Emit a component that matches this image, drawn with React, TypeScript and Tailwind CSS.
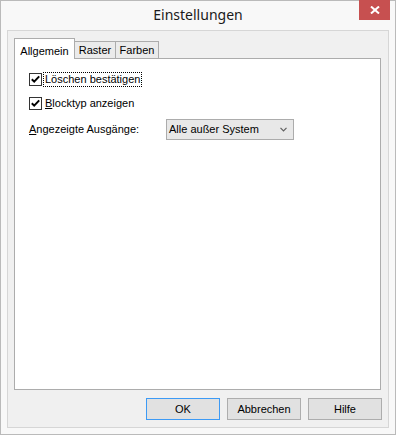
import React from 'react';

const uiFont = { fontFamily: '"Liberation Sans", Arial, sans-serif' };

function CheckBox({ checked }: { checked: boolean }) {
  return (
    <span className="flex h-[13px] w-[13px] shrink-0 items-center justify-center border border-[#333333] bg-white">
      {checked && (
        <svg width="11" height="11" viewBox="0 0 11 11">
          <polyline points="1.8,5.2 4.2,7.6 9.2,2.4" fill="none" stroke="#000" strokeWidth="2" />
        </svg>
      )}
    </span>
  );
}

function Tab({ label, active, width }: { label: string; active?: boolean; width: string }) {
  if (active) {
    return (
      <div
        className={`relative z-10 mb-[-1px] flex h-[21px] shrink-0 items-start justify-center border border-b-0 border-[#acacac] bg-white pt-[4px] ${width}`}
      >
        {label}
      </div>
    );
  }
  return (
    <div
      className={`-ml-px flex h-[17px] shrink-0 items-center justify-center border border-b-0 border-[#acacac] bg-[#ebebeb] pt-px ${width}`}
    >
      {label}
    </div>
  );
}

function DlgButton({ label, focused }: { label: string; focused?: boolean }) {
  return (
    <button
      className={`flex h-[22px] w-[74px] items-center justify-center border bg-[#e1e1e1] text-[11px] text-black ${
        focused ? 'border-[#3c9af5]' : 'border-[#adadad]'
      }`}
      style={uiFont}
    >
      {label}
    </button>
  );
}

export default function App() {
  return (
    <div className="flex h-[435px] w-[396px] flex-col border border-[#bababa] bg-[#f8f8f8]">
      {/* title bar */}
      <div className="grid h-[29px] shrink-0 grid-cols-[1fr_auto_1fr] items-start">
        <div />
        <div
          className="pt-[4px] text-[14px] leading-[20px] text-[#1a1a1a]"
          style={{ fontFamily: '"Noto Sans", "Open Sans", sans-serif' }}
        >
          Einstellungen
        </div>
        <div className="flex justify-end pr-[5px]">
          <div className="-mt-px flex h-[20px] w-[31px] items-center justify-center bg-[#c75050]">
            <svg width="10" height="8" viewBox="0 0 10 8">
              <line x1="1" y1="0.5" x2="9" y2="7.5" stroke="#fff" strokeWidth="2" />
              <line x1="9" y1="0.5" x2="1" y2="7.5" stroke="#fff" strokeWidth="2" />
            </svg>
          </div>
        </div>
      </div>

      {/* client frame */}
      <div
        className="mx-[6px] flex h-[398px] flex-col border border-[#d6d6d6] bg-[#f0f0f0] pl-[6px] pt-[7px] text-[11px] text-black"
        style={uiFont}
      >
        <div className="flex h-[20px] items-end">
          <Tab label="Allgemein" active width="w-[61px]" />
          <Tab label="Raster" width="w-[42px]" />
          <Tab label="Farben" width="w-[44px]" />
        </div>

        <div className="flex h-[332px] w-[367px] flex-col border border-[#acacac] bg-white pl-[14px] pt-[12px]">
          <div className="flex h-[16px] items-center">
            <CheckBox checked />
            <span className="ml-px border border-dotted border-black px-px leading-[13px]">Löschen bestätigen</span>
          </div>
          <div className="mt-[8px] flex h-[16px] items-center">
            <CheckBox checked />
            <span className="ml-px border border-transparent px-px leading-[13px]">
              <span className="underline">B</span>locktyp anzeigen
            </span>
          </div>
          <div className="mt-[8px] flex h-[21px] items-center">
            <span className="w-[137px]">
              <span className="underline">A</span>ngezeigte Ausgänge:
            </span>
            <div className="flex h-[21px] w-[128px] items-center justify-between border border-[#acacac] bg-[#e8e8e8] pl-[2px] pr-[6px]">
              <span>Alle außer System</span>
              <svg width="7" height="5" viewBox="0 0 7 5">
                <polyline points="0.5,0.8 3.5,3.8 6.5,0.8" fill="none" stroke="#606060" strokeWidth="1.2" />
              </svg>
            </div>
          </div>
        </div>

        <div className="mt-[8px] flex justify-end gap-[7px] pr-[6px]">
          <DlgButton label="OK" focused />
          <DlgButton label="Abbrechen" />
          <DlgButton label="Hilfe" />
        </div>
      </div>
    </div>
  );
}
